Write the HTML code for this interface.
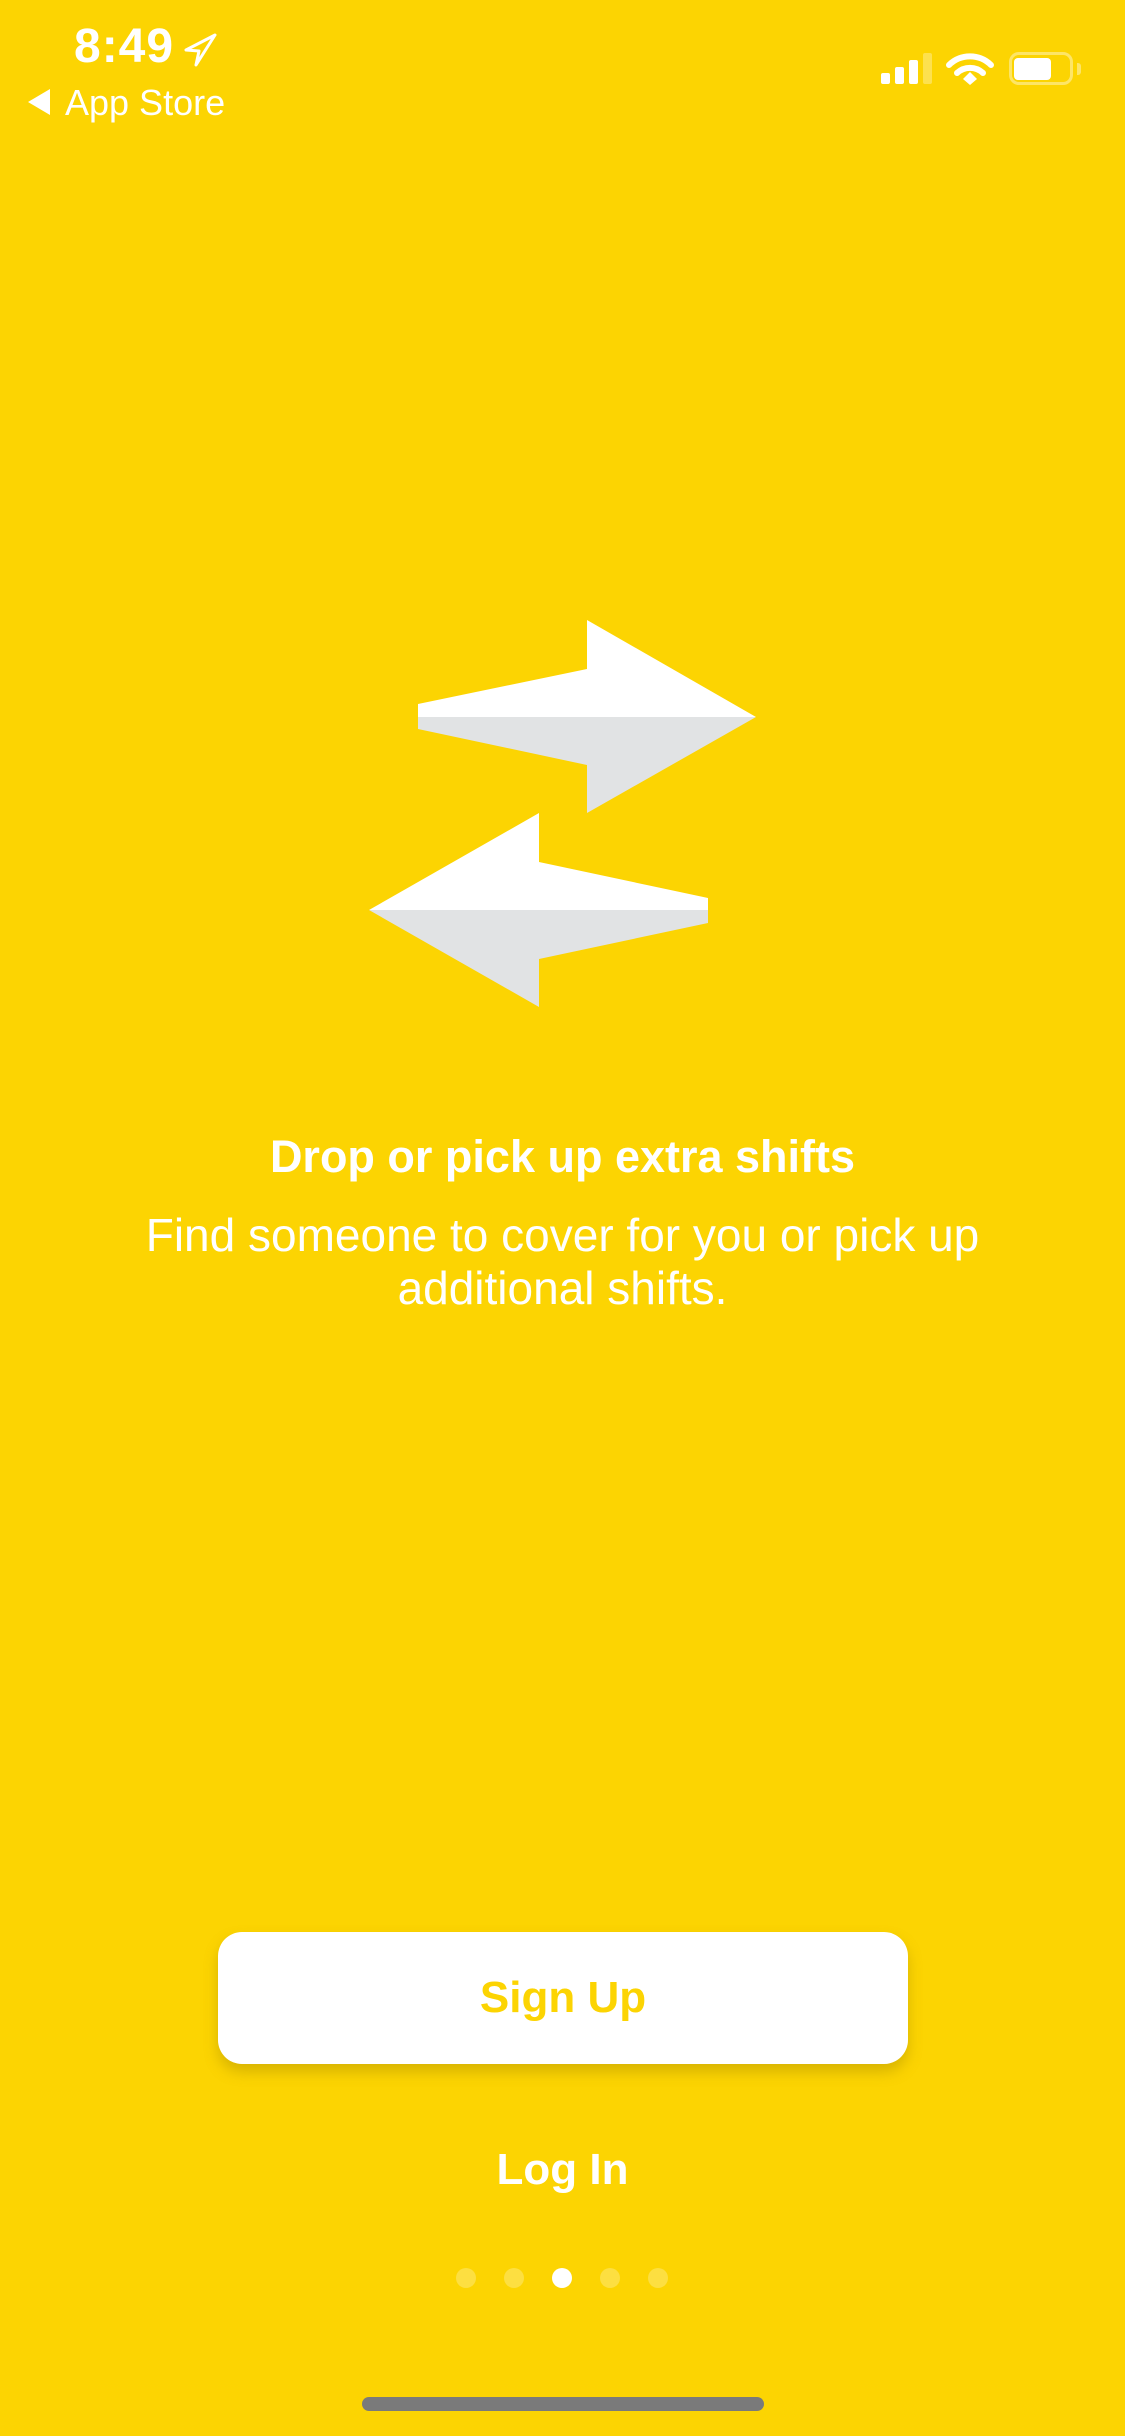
<!DOCTYPE html>
<html><head><meta charset="utf-8"><style>
html,body{margin:0;padding:0}
body{width:1125px;height:2436px;background:#FCD402;position:relative;overflow:hidden;font-family:"Liberation Sans",sans-serif;color:#fff}
.abs{position:absolute}
.title{left:0;width:1125px;text-align:center;top:1133px;font-size:45px;font-weight:bold;line-height:48px}
.sub{left:0;width:1125px;text-align:center;top:1209px;font-size:46px;line-height:53px}
.btn{left:218px;top:1932px;width:690px;height:132px;background:#fff;border-radius:24px;box-shadow:0 8px 14px rgba(150,120,0,0.35);color:#FCD402;font-weight:bold;font-size:44px;text-align:center;line-height:132px}
.login{left:0;width:1125px;text-align:center;top:2143px;font-size:44px;font-weight:bold;line-height:54px}
.dot{width:20px;height:20px;border-radius:50%;background:rgba(255,255,255,0.25);top:2268px}
</style></head><body>
<div class="abs" style="left:74px;top:19px;font-size:48px;font-weight:bold;line-height:56px;letter-spacing:1px">8:49</div>
<svg class="abs" style="left:184px;top:33px" width="34" height="34" viewBox="0 0 34 34"><path d="M31 2 L2 17 L15 18 L12 32 Z" fill="none" stroke="#fff" stroke-width="3" stroke-linejoin="round"/></svg>
<svg class="abs" style="left:28px;top:89px" width="24" height="26"><path d="M22 0 L22 26 L0 13 Z" fill="#fff"/></svg>
<div class="abs" style="left:65px;top:82px;font-size:36px;line-height:42px">App Store</div>
<div class="abs" style="left:881px;top:73px;width:9px;height:11px;background:#fff;border-radius:2px"></div>
<div class="abs" style="left:895px;top:67px;width:9px;height:17px;background:#fff;border-radius:2px"></div>
<div class="abs" style="left:909px;top:60px;width:9px;height:24px;background:#fff;border-radius:2px"></div>
<div class="abs" style="left:923px;top:53px;width:9px;height:31px;background:rgba(255,255,255,0.3);border-radius:2px"></div>
<svg class="abs" style="left:945px;top:50px" width="50" height="36" viewBox="0 0 50 36"><path d="M4 15 A30 30 0 0 1 46 15" fill="none" stroke="#fff" stroke-width="6" stroke-linecap="round"/><path d="M12 23 A19 19 0 0 1 38 23" fill="none" stroke="#fff" stroke-width="6" stroke-linecap="round"/><path d="M18 29 L25 22 L32 29 L25 35 Z" fill="#fff"/></svg>
<div class="abs" style="left:1009px;top:52px;width:58px;height:27px;border:3px solid rgba(255,255,255,0.4);border-radius:10px"></div>
<div class="abs" style="left:1014px;top:58px;width:37px;height:22px;background:#fff;border-radius:4px"></div>
<div class="abs" style="left:1077px;top:63px;width:4px;height:12px;background:rgba(255,255,255,0.4);border-radius:0 3px 3px 0"></div>
<svg class="abs" style="left:0;top:0" width="1125" height="1100">
<path d="M418 704 L587 669 L587 620 L756 717 L418 717 Z" fill="#fff"/>
<path d="M418 717 L756 717 L587 813 L587 765 L418 729 Z" fill="#E1E3E4"/>
<path d="M369 910 L539 813 L539 862 L708 898 L708 910 Z" fill="#fff"/>
<path d="M369 910 L708 910 L708 923 L539 959 L539 1007 Z" fill="#E1E3E4"/>
</svg>
<div class="abs title">Drop or pick up extra shifts</div>
<div class="abs sub">Find someone to cover for you or pick up<br>additional shifts.</div>
<div class="abs btn">Sign Up</div>
<div class="abs login">Log In</div>
<div class="abs dot" style="left:456px"></div>
<div class="abs dot" style="left:504px"></div>
<div class="abs dot" style="left:552px;background:#fff"></div>
<div class="abs dot" style="left:600px"></div>
<div class="abs dot" style="left:648px"></div>
<div class="abs" style="left:362px;top:2397px;width:402px;height:14px;background:#7a7a7a;border-radius:7px"></div>
</body></html>
